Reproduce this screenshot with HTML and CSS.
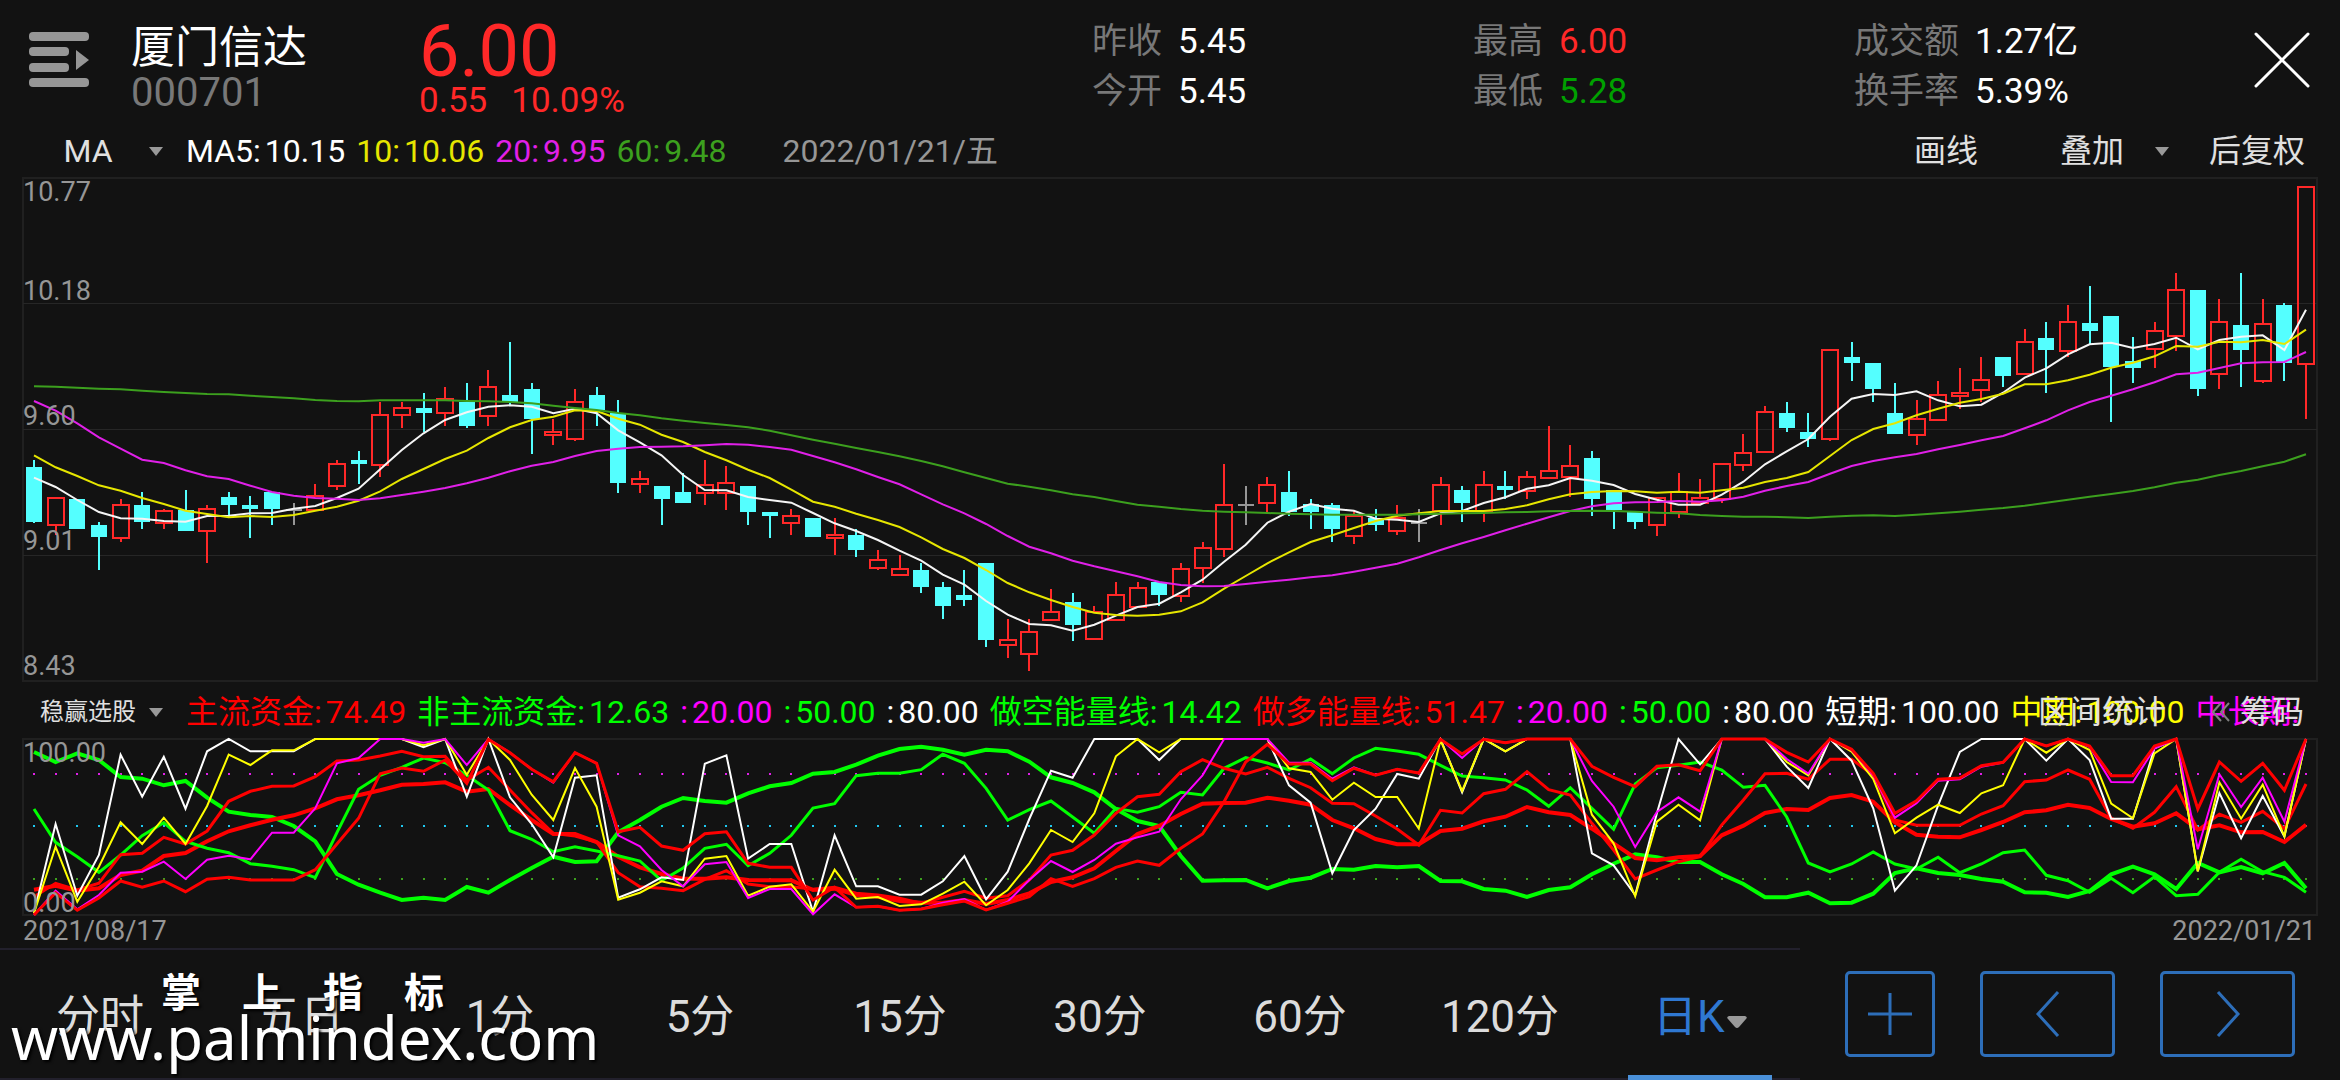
FILE: index.html
```html
<!DOCTYPE html>
<html lang="zh-CN">
<head>
<meta charset="utf-8">
<meta name="viewport" content="width=device-width, initial-scale=1">
<title>厦门信达 000701</title>
<link rel="stylesheet" href="styles.css">
</head>
<body>
<main class="app">
  <header class="quote">
    <button class="icon-button" type="button" aria-label="列表">
      <svg class="menu-icon" viewBox="0 0 60 56" width="60" height="56" aria-hidden="true">
        <rect x="0" y="0" width="60" height="9" rx="4"/>
        <rect x="0" y="15" width="40" height="9" rx="4"/>
        <rect x="0" y="31" width="40" height="9" rx="4"/>
        <rect x="0" y="46" width="60" height="9" rx="4"/>
        <path d="M47 18 60 28 47 38z"/>
      </svg>
    </button>
    <div class="stock">
      <h1 class="stock-name">厦门信达</h1>
      <p class="stock-code">000701</p>
    </div>
    <div class="price up">
      <p class="price-now">6.00</p>
      <p class="price-change"><span>0.55</span><span>10.09%</span></p>
    </div>
    <dl class="stats">
      <div class="stat"><dt>昨收</dt><dd>5.45</dd></div>
      <div class="stat"><dt>今开</dt><dd>5.45</dd></div>
    </dl>
    <dl class="stats">
      <div class="stat"><dt>最高</dt><dd class="up">6.00</dd></div>
      <div class="stat"><dt>最低</dt><dd class="down">5.28</dd></div>
    </dl>
    <dl class="stats">
      <div class="stat"><dt>成交额</dt><dd>1.27亿</dd></div>
      <div class="stat"><dt>换手率</dt><dd>5.39%</dd></div>
    </dl>
    <button class="icon-button" type="button" aria-label="关闭">
      <svg class="close-icon" viewBox="0 0 56 56" width="56" height="56" aria-hidden="true">
        <path d="M2 2 54 54M54 2 2 54"/>
      </svg>
    </button>
  </header>

  <div class="toolbar">
    <label class="pick pick-left">
      <select class="pick-select" aria-label="主图指标"><option>MA</option></select>
      <svg class="caret" viewBox="0 0 14 9" width="14" height="9" aria-hidden="true"><path d="M0 0h14L7 9z"/></svg>
    </label>
    <div class="legend">
      <span class="c-white"><b>MA5:</b>10.15</span>
      <span class="c-ma10"><b>10:</b>10.06</span>
      <span class="c-ma20"><b>20:</b>9.95</span>
      <span class="c-ma60"><b>60:</b>9.48</span>
    </div>
    <time class="cursor-date" datetime="2022-01-21">2022/01/21/五</time>
    <div class="tools">
      <button class="text-button" type="button">画线</button>
      <label class="pick overlay-pick">
        <select class="pick-select" aria-label="叠加"><option>叠加</option></select>
        <svg class="caret" viewBox="0 0 14 9" width="14" height="9" aria-hidden="true"><path d="M0 0h14L7 9z"/></svg>
      </label>
      <button class="text-button" type="button">后复权</button>
    </div>
  </div>

  <svg class="chart" id="candles" viewBox="0 0 2340 518" role="img" aria-label="日K线"></svg>

  <div class="indicator-bar">
    <label class="pick pick-left">
      <select class="pick-select pick-small" aria-label="副图指标"><option>稳赢选股</option></select>
      <svg class="caret" viewBox="0 0 14 9" width="14" height="9" aria-hidden="true"><path d="M0 0h14L7 9z"/></svg>
    </label>
    <div class="legend">
      <span class="c-red"><b>主流资金:</b>74.49</span>
      <span class="c-green"><b>非主流资金:</b>12.63</span>
      <span class="c-magenta"><b>:</b>20.00</span>
      <span class="c-green"><b>:</b>50.00</span>
      <span class="c-white"><b>:</b>80.00</span>
      <span class="c-green"><b>做空能量线:</b>14.42</span>
      <span class="c-red"><b>做多能量线:</b>51.47</span>
      <span class="c-magenta"><b>:</b>20.00</span>
      <span class="c-green"><b>:</b>50.00</span>
      <span class="c-white"><b>:</b>80.00</span>
      <span class="c-white"><b>短期:</b>100.00</span>
      <span class="c-yellow"><b>中期:</b>100.00</span>
      <span class="c-magenta"><b>中长期:</b></span>
    </div>
    <div class="indicator-tools">
      <button class="text-button" type="button">区间统计</button>
      <button class="text-button chips" type="button">
        <svg class="chips-icon" viewBox="0 0 18 20" width="18" height="20" aria-hidden="true"><path d="M9 1 1 10 9 19M17 1 9 10 17 19"/></svg>
        筹码
      </button>
    </div>
  </div>

  <svg class="chart" id="energy" viewBox="0 56 2340 184" role="img" aria-label="稳赢选股"></svg>

  <div class="dates">
    <time datetime="2021-08-17">2021/08/17</time>
    <time datetime="2022-01-21">2022/01/21</time>
  </div>

  <footer class="bottom">
    <nav class="tabs" aria-label="周期">
      <button class="tab" type="button">分时</button>
      <button class="tab" type="button">五日</button>
      <button class="tab" type="button">1分</button>
      <button class="tab" type="button">5分</button>
      <button class="tab" type="button">15分</button>
      <button class="tab" type="button">30分</button>
      <button class="tab" type="button">60分</button>
      <button class="tab" type="button">120分</button>
      <label class="tab tab-active">
        <select class="pick-select period-select" aria-label="K线周期"><option>日K</option></select>
        <svg class="period-caret" viewBox="0 0 20 12" width="20" height="12" aria-hidden="true"><path d="M2 0h16q3 1 1 3l-7 8q-2 2-4 0L1 3Q-1 1 2 0z"/></svg>
      </label>
    </nav>
    <div class="pager">
      <button class="box-button" type="button" aria-label="放大">
        <svg viewBox="0 0 46 46" width="46" height="46" aria-hidden="true"><path d="M23 2v42M1 23h44"/></svg>
      </button>
      <button class="box-button" type="button" aria-label="向前">
        <svg viewBox="0 0 46 46" width="46" height="46" aria-hidden="true"><path d="M33 1 13 23 33 45"/></svg>
      </button>
      <button class="box-button" type="button" aria-label="向后">
        <svg viewBox="0 0 46 46" width="46" height="46" aria-hidden="true"><path d="M13 1 33 23 13 45"/></svg>
      </button>
    </div>
    <div class="watermark">
      <p class="watermark-name"><span>掌</span><span>上</span><span>指</span><span>标</span></p>
      <p class="watermark-site">www.palmindex.com</p>
    </div>
  </footer>
</main>
<script src="script.js"></script>
</body>
</html>
```

FILE: styles.css
```css
* {
  box-sizing: border-box;
}

body,
h1,
p,
dl,
dd {
  margin: 0;
}

body {
  background: #121212;
  color: #e0e0e0;
  font-family: Roboto, "Noto Sans CJK SC", sans-serif;
  font-weight: 400;
}

button,
select {
  padding: 0;
  border: 0;
  background: none;
  color: inherit;
  font: inherit;
  appearance: none;
  cursor: pointer;
}

.app {
  display: flex;
  flex-direction: column;
  min-height: 100vh;
}

.up { color: #ff2828; }
.down { color: #00a000; }
.c-white { color: #ffffff; }
.c-ma10 { color: #e6e600; }
.c-ma20 { color: #e020e8; }
.c-ma60 { color: #3ca01e; }
.c-red { color: #ff0000; }
.c-green { color: #00ff00; }
.c-yellow { color: #ffff00; }
.c-magenta { color: #ff00ff; }

/* Quote header */
.quote {
  display: grid;
  grid-template-columns: 102px 288px 673fr 381fr 381fr 400fr 56px;
  height: 132px;
  padding: 0 30px 0 29px;
}

.icon-button {
  display: flex;
  align-items: flex-start;
  padding-top: 32px;
}

.menu-icon {
  fill: #969696;
}

.close-icon {
  fill: none;
  stroke: #ffffff;
  stroke-width: 3;
  stroke-linecap: round;
}

.stock {
  padding-top: 24px;
}

.stock-name {
  color: #ffffff;
  font-size: 44px;
  font-weight: 400;
  line-height: 48px;
}

.stock-code {
  color: #787878;
  font-size: 40px;
  line-height: 42px;
}

.price {
  padding-top: 14px;
}

.price-now {
  font-size: 72px;
  line-height: 76px;
}

.price-change {
  display: flex;
  gap: 24px;
  font-size: 35px;
  line-height: 22px;
}

.stats {
  padding-top: 17px;
  font-size: 35px;
  line-height: 50px;
}

.stat {
  display: flex;
  gap: 16px;
}

.stat dt {
  color: #787878;
}

.stat dd {
  color: #ffffff;
}

.stat .up { color: #ff2828; }
.stat .down { color: #00a000; }

/* Chart toolbars */
.toolbar,
.indicator-bar {
  display: flex;
  align-items: center;
  padding: 0 35px 0 40px;
  font-size: 32px;
  line-height: 38px;
}

.toolbar {
  height: 38px;
}

.indicator-bar {
  position: relative;
  height: 48px;
}

.pick {
  display: flex;
  align-items: center;
  gap: 13px;
}

.pick-left {
  flex: none;
  width: 146px;
}

.pick-left .pick-select {
  width: 96px;
  text-align-last: center;
}

.pick-left .pick-small {
  font-size: 24px;
}

.caret,
.period-caret {
  fill: #999999;
}

.legend {
  display: flex;
  gap: 11px;
  min-width: 0;
  overflow: hidden;
  white-space: nowrap;
}

.legend b {
  margin-right: 4px;
  font-weight: 400;
}

.cursor-date {
  margin-left: 56px;
  color: #969696;
}

.tools {
  display: flex;
  margin-left: auto;
}

.overlay-pick {
  gap: 30px;
  margin: 0 40px 0 82px;
}

.indicator-tools {
  position: absolute;
  top: 5px;
  right: 36px;
  display: flex;
  gap: 46px;
}

.chips {
  display: flex;
  align-items: center;
  gap: 10px;
}

.chips-icon {
  fill: none;
  stroke: #808080;
  stroke-width: 2;
}

/* Charts */
.chart {
  display: block;
  width: 100%;
  height: auto;
}

.frame,
.grid {
  fill: none;
  stroke: #202020;
  stroke-width: 2;
}

.grid {
  stroke-width: 1;
  stroke: #262626;
}

.axis {
  fill: #969696;
  font-size: 27px;
}

.line {
  fill: none;
  stroke-width: 2;
}

.line-thick { stroke-width: 4; }
.line-medium { stroke-width: 3; }

.rise {
  fill: none;
  stroke: #ff2828;
  stroke-width: 2;
}

.fall {
  fill: #54ffff;
  stroke: #54ffff;
  stroke-width: 2;
}

.fall rect {
  stroke: none;
}

.flat {
  fill: none;
  stroke: #969696;
  stroke-width: 2;
}

.dates {
  display: flex;
  justify-content: space-between;
  height: 28px;
  padding: 0 24px 0 23px;
  color: #969696;
  font-size: 27px;
  line-height: 22px;
}

/* Period tabs */
.bottom {
  position: relative;
  display: grid;
  flex: 1;
  grid-template-columns: minmax(0, 10fr) minmax(0, 3fr);
  min-height: 132px;
}

.tabs {
  display: grid;
  grid-template-columns: repeat(9, minmax(0, 1fr));
  border-top: 2px solid #22202c;
  border-bottom: 2px solid #22202c;
}

.tab {
  position: relative;
  display: flex;
  align-items: center;
  justify-content: center;
  padding-top: 6px;
  color: #dcdcdc;
  font-size: 44px;
  line-height: 52px;
}

.tab-active {
  color: #2f78d2;
}

.tab-active::after {
  content: "";
  position: absolute;
  right: 14%;
  bottom: -2px;
  left: 14%;
  height: 5px;
  background: #4a90d9;
}

.period-caret {
  margin: 10px 0 0 2px;
}

.pager {
  display: grid;
  grid-template-columns: 2fr 3fr 3fr;
  gap: 45px;
  padding: 23px 45px;
}

.box-button {
  display: flex;
  align-items: center;
  justify-content: center;
  border: 3px solid #2d6eb9;
  border-radius: 5px;
}

.box-button svg {
  fill: none;
  stroke: #2d6eb9;
  stroke-width: 3;
}

.watermark {
  position: absolute;
  top: 20px;
  left: 11px;
  color: #ffffff;
  text-shadow: 2px 2px 3px #000000;
  pointer-events: none;
}

.watermark-name {
  display: flex;
  gap: 41px;
  padding-left: 150px;
  font-size: 40px;
  font-weight: 700;
  line-height: 52px;
}

.watermark-site {
  font-family: "Noto Sans", sans-serif;
  font-size: 60px;
  line-height: 34px;
}
```

FILE: script.js
```js
// Levels are in thirds of a unit, measured down from the top of each panel.
const STEP = 21.638;
const FIRST = 34;
const xAt = i => +(FIRST + i * STEP).toFixed(1);
const yAt = v => +(v / 3).toFixed(1);

// [kind, high, body top, body bottom, low]; r = rise, f = fall, n = unchanged
const candles = [
  ["f",870,890,1056,1058],["r",980,984,1066,1096],["f",986,986,1077,1077],["f",1057,1064,1102,1199],["r",987,1005,1105,1115],
  ["f",967,1006,1056,1077],["r",1018,1024,1058,1077],["f",960,1019,1083,1083],["r",1005,1018,1084,1180],["f",967,980,1005,1040],
  ["f",979,1006,1018,1103],["f",967,967,1018,1064],["n",999,1020,1020,1064],["r",941,978,1020,1022],["r",870,882,948,960],
  ["f",844,870,883,941],["r",696,734,884,922],["r",696,714,736,774],["f",670,715,728,787],["r",652,688,730,768],
  ["f",638,695,767,774],["r",600,650,737,768],["f",516,676,697,708],["f",638,657,747,852],["r",747,787,794,825],
  ["r",657,695,808,812],["f",651,676,720,768],["f",690,730,940,968],["r",903,926,943,968],["f",948,948,986,1064],
  ["f",910,967,999,999],["r",870,946,968,1005],["r",889,940,968,1020],["f",948,948,1025,1064],["f",1025,1025,1038,1103],
  ["r",1018,1037,1059,1096],["f",1045,1045,1102,1102],["r",1045,1096,1103,1155],["f",1077,1096,1141,1160],["r",1141,1171,1195,1199],
  ["r",1155,1196,1214,1214],["f",1180,1199,1250,1270],["f",1237,1251,1308,1347],["f",1199,1276,1289,1308],["f",1180,1180,1411,1431],
  ["r",1348,1411,1426,1464],["r",1348,1385,1452,1502],["r",1257,1326,1349,1354],["f",1270,1296,1366,1412],["r",1308,1326,1407,1407],
  ["r",1237,1274,1350,1350],["r",1237,1255,1310,1310],["f",1237,1237,1276,1308],["r",1180,1197,1278,1296],["r",1116,1134,1195,1238],
  ["r",883,1005,1136,1160],["n",948,1006,1006,1064],["r",921,946,1000,1028],["f",903,967,1025,1038],["f",987,1003,1025,1077],
  ["f",999,1006,1077,1115],["r",1020,1038,1098,1121],["f",1018,1045,1064,1083],["r",1005,1043,1084,1096],["n",1018,1058,1058,1116],
  ["r",921,946,1022,1064],["f",948,961,998,1057],["r",903,946,1024,1057],["f",903,948,961,987],["r",903,920,962,987],
  ["r",767,902,923,925],["r",825,888,921,980],["f",844,864,987,1038],["f",961,961,1020,1077],["f",1025,1025,1057,1077],
  ["r",980,985,1066,1097],["r",909,966,1027,1044],["r",928,985,1000,1003],["r",880,881,988,1000],["r",793,850,884,903],
  ["r",709,727,846,848],["f",696,729,773,787],["f",728,787,806,832],["r",538,540,806,812],["f",516,561,580,632],
  ["f",580,580,657,696],["f",638,729,793,793],["r",690,746,795,825],["r",632,676,749,749],["r",593,669,678,716],
  ["r",561,630,660,696],["f",561,561,618,651],["r",477,515,613,614],["f",457,503,541,670],["r",406,456,542,560],
  ["f",348,458,484,522],["f",438,438,592,755],["f",502,574,593,638],["r",457,482,536,593],["r",309,360,497,542],
  ["f",361,361,657,677],["r",387,456,613,657],["f",309,464,541,651],["r",387,463,634,638],["f",400,406,580,632],
  ["r",50,50,581,747]
];

const averages = [
  ["#f5f5f5", [923,951,990,1026,1045,1046,1053,1055,1038,1037,1030,1029,1016,1008,984,956,898,840,790,750,727,710,706,710,730,716,730,781,817,856,915,960,961,981,990,998,1029,1060,1083,1110,1142,1172,1214,1244,1293,1334,1362,1366,1382,1364,1337,1311,1301,1267,1229,1175,1124,1058,1025,1002,1016,1022,1046,1049,1056,1030,1023,999,982,956,946,924,932,945,972,989,1004,1004,974,935,883,844,807,740,686,672,675,664,691,709,704,668,623,595,553,523,518,534,522,503,538,510,500,496,540,419]],
  ["#e6e600", [856,892,918,946,962,984,1002,1022,1032,1042,1038,1041,1035,1022,1010,992,964,927,897,867,842,804,772,750,740,721,723,746,764,794,816,846,871,899,924,959,995,1010,1031,1050,1071,1102,1137,1164,1200,1239,1267,1290,1311,1328,1335,1337,1334,1324,1297,1256,1218,1180,1147,1116,1096,1074,1053,1037,1030,1023,1023,1023,1017,1006,988,973,966,963,964,968,965,968,961,953,936,924,906,858,810,777,760,736,716,698,687,671,643,643,631,614,593,578,559,528,530,515,517,510,522,479]],
  ["#e020e8", [693,722,760,802,836,869,879,901,919,927,947,966,977,984,986,990,985,975,965,954,940,923,904,887,876,858,843,836,831,830,829,826,822,824,831,839,858,877,898,921,943,973,1003,1030,1062,1098,1130,1150,1172,1189,1204,1219,1236,1245,1249,1248,1242,1235,1229,1222,1216,1205,1193,1181,1162,1140,1120,1101,1081,1061,1042,1023,1009,1000,997,996,993,995,991,980,962,948,936,911,888,873,862,852,838,825,811,798,775,751,721,696,677,658,637,613,608,594,580,577,576,546]],
  ["#3ca01e", [649,650,653,656,658,662,666,669,672,673,677,681,685,690,693,694,691,691,691,691,693,694,696,700,707,714,720,729,736,745,752,759,765,772,782,796,809,821,834,846,859,873,889,907,924,941,950,961,973,981,993,1004,1010,1017,1022,1025,1027,1029,1031,1033,1034,1034,1034,1034,1033,1031,1030,1029,1027,1026,1024,1023,1022,1023,1025,1028,1030,1035,1038,1040,1040,1042,1044,1040,1037,1036,1038,1034,1030,1025,1019,1014,1007,998,989,980,972,963,952,938,929,915,903,889,875,853]]
];

const energy = [
  ["#00ff00", "line-thick", [216,246,220,240,291,296,316,303,353,395,405,411,438,484,582,614,638,660,653,660,621,638,600,564,530,546,544,457,420,380,354,363,368,340,319,309,281,276,254,227,207,200,209,224,209,214,245,292,309,337,387,423,438,528,602,601,600,625,603,593,567,569,558,562,558,603,604,627,632,651,630,622,583,551,523,532,546,546,583,612,652,652,638,670,668,641,579,565,579,585,597,605,637,638,651,633,583,560,583,627,549,577,561,580,549,625]],
  ["#ff0000", "line-thick", [629,617,632,625,585,572,528,519,484,454,436,419,406,385,358,346,331,314,312,307,335,327,375,420,462,462,486,530,562,582,596,596,592,600,601,601,630,626,645,650,663,668,668,660,672,660,640,606,592,565,513,462,438,402,371,369,368,353,362,374,420,445,477,493,493,453,446,424,410,381,397,405,446,490,534,541,532,528,466,437,399,387,390,354,345,365,427,464,470,472,450,426,397,391,374,384,417,440,430,400,448,436,457,456,486,434]],
  ["#00ff00", "line-medium", [387,487,530,577,525,467,428,484,505,518,551,559,569,593,458,328,286,262,234,248,286,330,452,478,515,500,513,527,543,602,564,505,493,557,520,466,384,371,287,280,280,269,223,250,325,420,389,363,411,460,385,397,380,337,345,265,233,249,270,237,281,234,205,213,223,256,288,293,300,330,379,323,385,448,312,263,256,246,270,322,316,411,549,576,552,516,552,567,532,578,552,518,510,586,602,637,595,638,590,647,643,577,538,575,592,637]],
  ["#ff0000", "line-medium", [650,610,630,610,524,520,472,492,453,364,334,319,318,290,243,240,228,214,230,229,300,262,330,398,460,468,486,578,620,625,632,598,572,612,620,620,628,622,640,645,655,670,652,634,655,647,600,525,511,465,400,350,343,275,239,265,282,262,295,323,370,371,408,447,495,391,399,341,328,275,329,345,430,510,597,570,545,530,435,360,281,280,298,238,238,285,420,436,436,436,402,377,305,300,270,298,415,445,397,320,450,403,427,394,446,312]],
  ["#ffffff", "", [700,432,647,525,224,350,230,386,214,177,214,214,214,177,177,177,177,177,202,177,350,177,352,432,532,293,286,653,628,592,600,251,226,536,492,492,695,466,619,619,644,644,604,528,658,575,417,272,293,177,177,177,240,177,177,177,177,177,316,368,580,450,386,282,296,177,337,177,214,177,177,177,520,556,645,400,177,253,177,177,177,260,324,177,242,385,632,556,376,216,177,177,177,242,177,240,416,416,205,177,574,339,475,348,470,177]],
  ["#ffff00", "", [700,500,665,560,427,492,413,492,378,224,255,211,211,177,177,177,177,177,196,177,284,177,240,344,420,264,380,659,638,604,619,536,528,647,620,613,695,569,656,651,678,673,641,605,676,630,550,450,486,400,229,177,217,177,177,177,177,177,265,276,359,308,351,351,446,180,333,177,214,177,177,177,404,490,649,425,374,421,177,177,177,246,286,177,215,297,460,413,374,399,340,316,177,218,177,210,371,415,220,177,574,307,416,314,469,177]],
  ["#ff00ff", "", [705,632,688,645,578,575,545,597,539,527,538,458,458,385,250,234,177,177,188,177,255,177,218,268,308,218,250,466,499,570,619,553,546,654,627,627,703,643,682,679,691,687,668,657,690,665,600,543,576,540,491,472,455,358,286,177,177,177,248,248,296,262,286,268,279,177,234,177,188,177,177,177,303,380,501,396,352,395,177,177,177,237,281,177,210,285,413,370,302,298,260,248,177,198,177,200,306,307,205,177,508,283,381,293,425,177]],
  ["#ff0000", "line-medium", [705,638,691,654,603,622,603,635,598,592,600,600,600,569,492,415,281,264,274,240,310,178,218,268,305,218,250,455,442,498,511,461,455,550,562,562,660,622,682,679,691,687,674,663,690,670,650,596,619,596,562,543,556,505,462,365,246,193,252,252,302,265,286,268,279,178,222,178,188,177,177,177,259,292,320,259,254,272,177,177,177,217,246,177,208,280,400,362,298,294,257,247,177,198,177,198,287,287,198,177,387,246,304,250,331,177]]
];

const polyline = (values, color, kind = "") =>
  `<polyline class="line ${kind}" stroke="${color}" points="${values.map((v, i) => `${xAt(i)},${yAt(v)}`).join(" ")}"/>`;

const label = (text, y) => `<text class="axis" x="23" y="${yAt(y)}">${text}</text>`;

// Candles snap to whole units so that their edges stay sharp.
function candle([kind, high, top, bottom, low], i) {
  const x = Math.round(xAt(i));
  const [h, t, b, l] = [high, top, bottom, low].map(v => Math.round(v / 3));
  if (kind === "r") {
    return `<g class="rise"><path d="M${x} ${h}V${t}M${x} ${b}V${l}"/><rect x="${x - 8}" y="${t}" width="16" height="${b - t}"/></g>`;
  }
  if (kind === "f") {
    return `<g class="fall"><path d="M${x} ${h}V${l}"/><rect x="${x - 8}" y="${t}" width="16" height="${b - t}"/></g>`;
  }
  return `<path class="flat" d="M${x} ${h}V${l}M${x - 8} ${t}h16"/>`;
}

document.getElementById("candles").innerHTML =
  `<rect class="frame" x="23" y="8" width="2294" height="503"/>` +
  `<path class="grid" d="M23 133.5H2317M23 259.5H2317M23 385.5H2317"/>` +
  candles.map(candle).join("") +
  averages.map(([color, values]) => polyline(values, color)).join("") +
  label("10.77", 94) + label("10.18", 389) + label("9.60", 765) + label("9.01", 1140) + label("8.43", 1515);

const dots = [["#e020e8", 282], ["#20c8f0", 438], ["#3ca01e", 597]]
  .map(([color, y]) => candles.map((_, i) => `<rect fill="${color}" x="${Math.round(xAt(i)) - 1}" y="${y / 3 - 1}" width="2" height="2"/>`).join(""))
  .join("");

document.getElementById("energy").innerHTML =
  `<rect class="frame" x="23" y="59" width="2294" height="176"/>` + dots +
  energy.map(([color, kind, values]) => polyline(values, color, kind)).join("") +
  label("100.00", 245) + label("0.00", 695);
```
